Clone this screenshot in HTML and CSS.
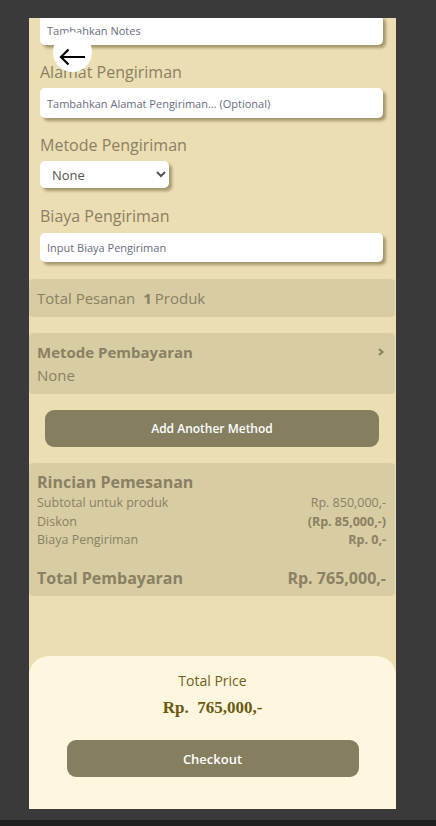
FILE: index.html
```html
<!DOCTYPE html>
<html lang="en">
<head>
    <meta charset="UTF-8">
    <meta name="viewport" content="width=device-width, initial-scale=1.0">
    <title>Checkout</title>
    <link rel="stylesheet" href="styles.css">
</head>
<body>

    <div id="screen">
        <div id="scroller">
            <div class="field" id="notesField">
                <div class="field-label">Notes</div>
                <input class="field-input" type="text" placeholder="Tambahkan Notes">
            </div>

            <div class="field">
                <div class="field-label">Alamat Pengiriman</div>
                <input class="field-input" type="text" placeholder="Tambahkan Alamat Pengiriman... (Optional)">
            </div>

            <div class="field">
                <div class="field-label">Metode Pengiriman</div>
                <select class="field-select">
                    <option>None</option>
                    <option>JNE</option>
                    <option>J&amp;T</option>
                </select>
            </div>

            <div class="field">
                <div class="field-label fee-label">Biaya Pengiriman</div>
                <input class="field-input fee" type="text" placeholder="Input Biaya Pengiriman">
            </div>

            <div class="box order-count">
                Total Pesanan <b>1</b>Produk
            </div>

            <div class="box pay-method">
                <div class="pay-head">
                    <span>Metode Pembayaran</span>
                    <svg width="8" height="10" viewBox="0 0 8 10"><polyline points="2,2 5.5,5 2,8" fill="none" stroke="#8a8063" stroke-width="2"/></svg>
                </div>
                <div class="pay-value">None</div>
            </div>

            <button class="main-button add-method">Add Another Method</button>

            <div class="box details">
                <div class="details-title">Rincian Pemesanan</div>
                <div class="details-row"><span>Subtotal untuk produk</span><span>Rp. 850,000,-</span></div>
                <div class="details-row"><span>Diskon</span><b>(Rp. 85,000,-)</b></div>
                <div class="details-row"><span>Biaya Pengiriman</span><b>Rp. 0,-</b></div>
                <div class="details-total"><span>Total Pembayaran</span><span>Rp. 765,000,-</span></div>
            </div>
        </div>

        <div id="checkoutBar">
            <div class="total-label">Total Price</div>
            <div class="total-price">Rp.&nbsp; 765,000,-</div>
            <button class="main-button checkout">Checkout</button>
        </div>

        <button class="back-button" onclick="history.back()">
            <svg width="40" height="40" viewBox="0 0 40 40">
                <path d="M8 25 H32 M15.5 17.5 L8 25 L15.5 32.5" fill="none" stroke="#000" stroke-width="2.2"/>
            </svg>
        </button>
    </div>

    <div id="bottomStrip"></div>

    <script>
        // keep the page scrolled down to the shipping fields
        const scroller = document.getElementById('scroller');
        const notes = document.getElementById('notesField');
        scroller.scrollTop = notes.offsetTop + notes.offsetHeight - 27;
    </script>
</body>
</html>
```

FILE: styles.css
```css
body {
    margin: 0;
    padding: 0;
    font-family: 'Open Sans', 'Noto Sans', sans-serif;
    background-color: #3a3a3a;
    height: 826px;
    overflow: hidden;
    position: relative;
}

#screen {
    position: relative;
    margin: 18px 0 0 29px;
    width: 367px;
    height: 791px;
    display: flex;
    flex-direction: column;
    background-color: #ecdeb3;
    overflow: hidden;
}

#scroller {
    position: relative;
    flex-grow: 1;
    min-height: 0;
    overflow: hidden;
    padding-bottom: 120px;
}

#bottomStrip {
    position: absolute;
    left: 0;
    right: 0;
    bottom: 0;
    height: 6px;
    background-color: #1f1f1f;
}

.field {
    padding: 15px 13px 0 11px;
}

.field-label {
    font-size: 16px;
    line-height: 24px;
    color: #8a8063;
    margin-bottom: 4px;
}

.field-label.fee-label {
    margin-bottom: 5px;
}

.field-input {
    display: block;
    box-sizing: border-box;
    width: 100%;
    height: 30px;
    border: none;
    border-radius: 5px;
    padding: 0 7px;
    font-family: inherit;
    font-size: 11px;
    background-color: #ffffff;
    box-shadow: 3px 3px 3px rgba(110, 95, 50, 0.55);
    outline: none;
}

.field-input.fee {
    height: 29px;
}

.field-input::placeholder {
    color: #6a6c7e;
}

.field-select {
    display: block;
    width: 129px;
    height: 27px;
    margin-bottom: 1px;
    border: none;
    border-radius: 5px;
    padding: 0 8px;
    font-family: inherit;
    font-size: 13px;
    color: #555;
    background-color: #ffffff;
    box-shadow: 3px 3px 3px rgba(110, 95, 50, 0.55);
    outline: none;
}

.box {
    background-color: #d8cca3;
    border-radius: 4px;
    color: #8a8063;
    margin-right: 1px;
}

.order-count {
    margin-top: 17px;
    height: 38px;
    line-height: 38px;
    padding-left: 8px;
    font-size: 15px;
}

.order-count b {
    margin: 0 3px 0 4px;
}

.pay-method {
    margin-top: 16px;
    padding: 9px 10px 9px 8px;
}

.pay-head {
    display: flex;
    justify-content: space-between;
    align-items: center;
    font-size: 15px;
    line-height: 20px;
    font-weight: 700;
}

.pay-value {
    margin-top: 3px;
    font-size: 15px;
    line-height: 20px;
}

.main-button {
    display: block;
    border: none;
    background-color: #857e5f;
    color: #ffffff;
    font-family: inherit;
    font-weight: 600;
    font-size: 12px;
    cursor: pointer;
}

.add-method {
    margin: 16px 17px 0 16px;
    width: 334px;
    height: 37px;
    border-radius: 9px;
}

.details {
    margin-top: 16px;
    padding: 8px 9px 6px 8px;
}

.details-title {
    font-size: 16px;
    line-height: 22px;
    font-weight: 700;
    margin-bottom: 1px;
}

.details-row {
    display: flex;
    justify-content: space-between;
    font-size: 12.5px;
    line-height: 18.5px;
}

.details-total {
    display: flex;
    justify-content: space-between;
    margin-top: 16px;
    font-size: 16px;
    line-height: 24px;
    font-weight: 700;
}

#checkoutBar {
    flex-shrink: 0;
    height: 153px;
    box-sizing: border-box;
    padding-top: 15px;
    background-color: #fef6de;
    border-radius: 20px 20px 0 0;
    text-align: center;
}

.total-label {
    font-size: 14px;
    line-height: 20px;
    color: #715e1c;
}

.total-price {
    margin-top: 5px;
    font-family: 'Liberation Serif', 'DejaVu Serif', serif;
    font-weight: 700;
    font-size: 17px;
    line-height: 24px;
    color: #6b5a12;
}

.checkout {
    margin: 20px auto 0;
    width: 292px;
    height: 37px;
    border-radius: 9px;
    font-size: 13px;
}

.back-button {
    position: absolute;
    left: 24px;
    top: 14px;
    width: 39px;
    height: 40px;
    padding: 0;
    border: none;
    border-radius: 50%;
    background-color: #ffffff;
    cursor: pointer;
}

.back-button svg {
    display: block;
}
```
